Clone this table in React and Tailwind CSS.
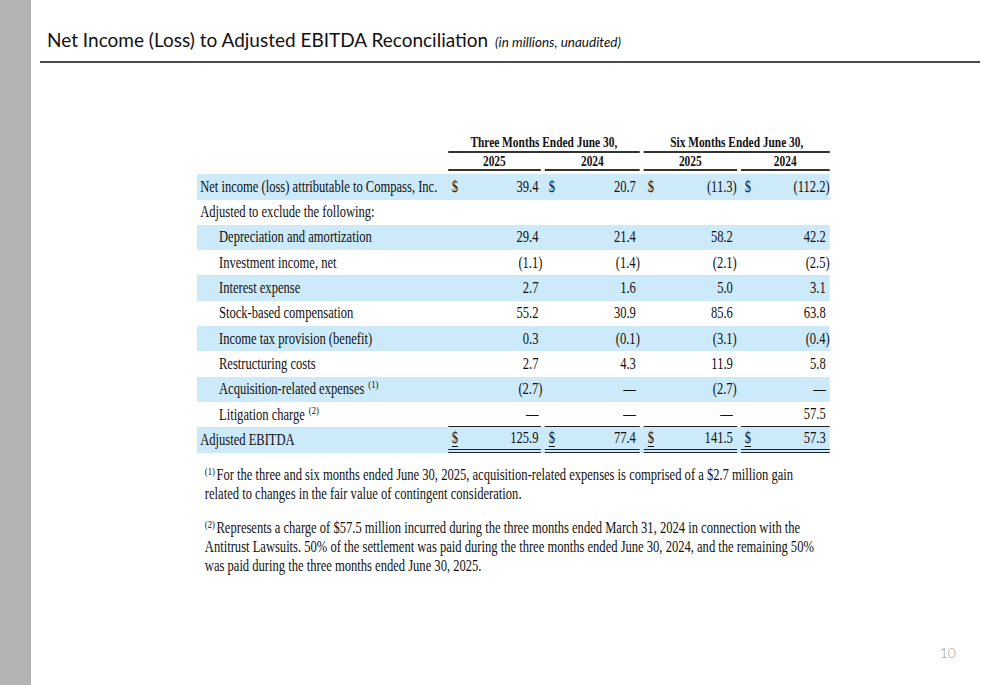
const serif = { fontFamily: '"Liberation Serif", "Times New Roman", serif' };

const cols = [
  { w: "w-[123.6px]", gap: "mr-[5px]", pr: "pr-[3px]" },
  { w: "w-[126.1px]", gap: "mr-[5px]", pr: "pr-[5px]" },
  { w: "w-[123.6px]", gap: "mr-[5px]", pr: "pr-[5px]" },
  { w: "w-[113.4px]", gap: "mr-0", pr: "pr-[5px]" },
];

const rows = [
  { label: "Net income (loss) attributable to Compass, Inc.", vals: ["39.4", "20.7", "(11.3)", "(112.2)"], dollar: true, bg: true },
  { label: "Adjusted to exclude the following:", vals: null },
  { label: "Depreciation and amortization", indent: true, vals: ["29.4", "21.4", "58.2", "42.2"], bg: true },
  { label: "Investment income, net", indent: true, vals: ["(1.1)", "(1.4)", "(2.1)", "(2.5)"] },
  { label: "Interest expense", indent: true, vals: ["2.7", "1.6", "5.0", "3.1"], bg: true },
  { label: "Stock-based compensation", indent: true, vals: ["55.2", "30.9", "85.6", "63.8"] },
  { label: "Income tax provision (benefit)", indent: true, vals: ["0.3", "(0.1)", "(3.1)", "(0.4)"], bg: true },
  { label: "Restructuring costs", indent: true, vals: ["2.7", "4.3", "11.9", "5.8"] },
  { label: "Acquisition-related expenses", note: "(1)", indent: true, vals: ["(2.7)", "—", "(2.7)", "—"], bg: true },
  { label: "Litigation charge", note: "(2)", indent: true, vals: ["—", "—", "—", "57.5"], underline: true },
  { label: "Adjusted EBITDA", vals: ["125.9", "77.4", "141.5", "57.3"], dollar: true, bg: true, total: true },
];

function Value({ v }) {
  if (v.startsWith("(")) {
    return (
      <span>
        {v.slice(0, -1)}
        <span className="-mr-[5px]">)</span>
      </span>
    );
  }
  return <span>{v}</span>;
}

function Row({ row }) {
  return (
    <div className={`flex h-[25.3px] ${row.bg ? "bg-[#cdeafa]" : ""}`}>
      <div className={`w-[319.7px] flex items-center ${row.indent ? "pl-[28px]" : "pl-[4px]"}`}>
        {row.label}
        {row.note && <sup className="ml-[5px] text-[11px] -top-[5px]">{row.note}</sup>}
      </div>
      {row.vals &&
        row.vals.map((v, i) => (
          <div key={i} className={`${cols[i].w} flex`}>
            <div
              className={`flex-1 flex items-center justify-between pl-[5px] ${cols[i].pr} ${cols[i].gap} ${
                row.underline ? "border-b-[1.5px] border-[#222]" : ""
              } ${row.total ? "border-b-[4px] border-double border-[#222]" : ""}`}
            >
              <span className={row.total ? "underline underline-offset-[3px]" : ""}>{row.dollar ? "$" : ""}</span>
              <Value v={v} />
            </div>
          </div>
        ))}
    </div>
  );
}

export default function App() {
  return (
    <div className="flex w-[1000px] h-[685px] bg-white text-[#111] overflow-hidden">
      <div className="w-[31px] h-full bg-[#b3b3b3] shrink-0" />
      <div className="flex-1 flex flex-col">
        <div className="pt-[28px] pl-[16px] flex items-baseline" style={{ fontFamily: 'Lato, "Noto Sans", sans-serif' }}>
          <span className="text-[19px] leading-[24px] text-[#111]">
            Net Income (Loss) to Adjusted EBITDA Reconciliation
          </span>
          <span className="ml-[7px] text-[13.5px] italic text-[#111]">(in millions, unaudited)</span>
        </div>
        <div className="mt-[9px] ml-[9px] mr-[23px] h-[2px] bg-[#4a4a4a]" />

        <div className="ml-[166px] mt-[70px] w-[806px] origin-top-left scale-x-[0.785]" style={serif}>
          <div className="text-[14.5px] font-bold flex">
            <div className="w-[319.7px]" />
            <div className="w-[249.7px] flex">
              <div className="flex-1 mr-[5px] h-[20px] text-center leading-[18px] border-b-[2px] border-[#333]">
                Three Months Ended June 30,
              </div>
            </div>
            <div className="w-[237px] flex">
              <div className="flex-1 h-[20px] text-center leading-[18px] border-b-[2px] border-[#333]">
                Six Months Ended June 30,
              </div>
            </div>
          </div>
          <div className="text-[14.5px] font-bold flex">
            <div className="w-[319.7px]" />
            {["2025", "2024", "2025", "2024"].map((y, i) => (
              <div key={i} className={`${cols[i].w} flex`}>
                <div className={`flex-1 ${cols[i].gap} h-[18px] leading-[16px] text-center border-b-[2px] border-[#333]`}>
                  {y}
                </div>
              </div>
            ))}
          </div>
          <div className="mt-[3px] text-[16px]">
            {rows.map((r, i) => (
              <Row key={i} row={r} />
            ))}
          </div>

          <div className="mt-[12px] pl-[10px] text-[16px] leading-[19px]">
            <p>
              <sup className="text-[11px] -top-[5px] mr-[2px]">(1)</sup>For the three and six months ended June 30, 2025,
              acquisition-related expenses is comprised of a $2.7 million gain
              <br />
              related to changes in the fair value of contingent consideration.
            </p>
            <p className="mt-[15px]">
              <sup className="text-[11px] -top-[5px] mr-[2px]">(2)</sup>Represents a charge of $57.5 million incurred during
              the three months ended March 31, 2024 in connection with the
              <br />
              Antitrust Lawsuits. 50% of the settlement was paid during the three months ended June 30, 2024, and the remaining 50%
              <br />
              was paid during the three months ended June 30, 2025.
            </p>
          </div>
        </div>

        <div className="mt-auto mb-[22px] pr-[47px] flex justify-end text-[14px] text-[#9a9a9a] font-light" style={{ fontFamily: 'Lato, "Noto Sans", sans-serif' }}>
          10
        </div>
      </div>
    </div>
  );
}
